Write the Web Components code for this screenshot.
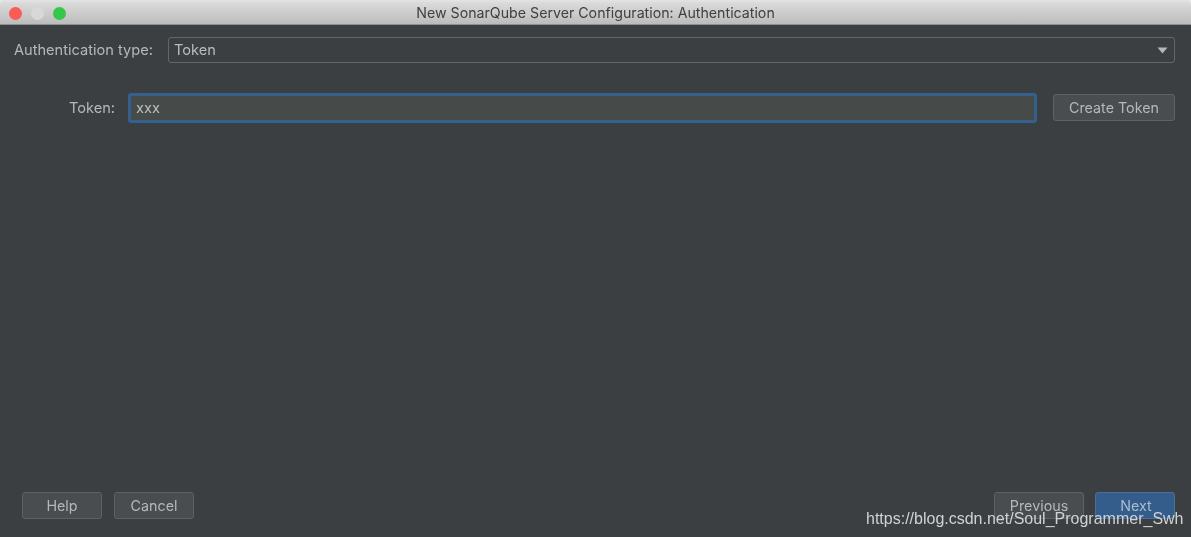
<!DOCTYPE html>
<html>
<head>
<meta charset="utf-8">
<title>New SonarQube Server Configuration: Authentication</title>
<style>
  html, body { margin: 0; height: 100%; background: #3c3f41; overflow: hidden; }
  body { font-family: "Inter", "Liberation Sans", sans-serif; }
</style>
</head>
<body>
<auth-dialog></auth-dialog>

<script>
class TitleBar extends HTMLElement {
  constructor() {
    super();
    this.attachShadow({ mode: 'open' });
    this.shadowRoot.innerHTML = `
      <style>
        :host {
          display: flex;
          align-items: center;
          height: 25px;
          flex: none;
          box-sizing: border-box;
          padding: 2px 0 0 9px;
          background: linear-gradient(#e4e4e4, #d9d9d9 15%, #bcbcbc);
          border-bottom: 1px solid #8f8f8f;
          border-radius: 5px 5px 0 0;
        }
        .dot { width: 13px; height: 13px; border-radius: 50%; margin-right: 9px; flex: none; }
        .close { background: #fb5b55; }
        .min { background: #d8d8d8; }
        .max { background: #34c748; }
        .title {
          flex: 1;
          text-align: center;
          margin: -2px 0 0 -75px;
          font: 14.2px "Inter", "Liberation Sans", sans-serif;
          color: #404040;
        }
      </style>
      <span class="dot close"></span>
      <span class="dot min"></span>
      <span class="dot max"></span>
      <span class="title"><slot></slot></span>
    `;
  }
}

class DlgButton extends HTMLElement {
  constructor() {
    super();
    this.attachShadow({ mode: 'open' });
    this.shadowRoot.innerHTML = `
      <style>
        :host {
          display: flex;
          align-items: center;
          justify-content: center;
          box-sizing: border-box;
          height: 27px;
          flex: none;
          border: 1px solid #5e6264;
          border-radius: 3px;
          background: #494d4f;
          color: #b4b8ba;
          font: 14.3px "Inter", "Liberation Sans", sans-serif;
        }
        :host([primary]) {
          padding-left: 2px;
          background: #345d8c;
          border-color: #4a7096;
          color: #a9bccf;
        }
      </style>
      <slot></slot>
    `;
  }
}

class ComboBox extends HTMLElement {
  constructor() {
    super();
    this.attachShadow({ mode: 'open' });
    this.shadowRoot.innerHTML = `
      <style>
        :host {
          display: flex;
          align-items: center;
          flex: 1;
          box-sizing: border-box;
          height: 26px;
          padding: 0 6px 0 5px;
          border: 1px solid #63676a;
          border-radius: 3px;
          background: #3c3f41;
          color: #b9bcbe;
          font: 14.6px "Inter", "Liberation Sans", sans-serif;
        }
        .text { flex: 1; }
        svg { display: block; }
      </style>
      <span class="text"><slot></slot></span>
      <svg width="11" height="7" viewBox="0 0 11 7"><path d="M0.5 0.5h10L5.5 6.5z" fill="#b4b7b9"/></svg>
    `;
  }
}

class TextInput extends HTMLElement {
  constructor() {
    super();
    this.attachShadow({ mode: 'open' });
    this.shadowRoot.innerHTML = `
      <style>
        :host {
          display: flex;
          align-items: center;
          flex: 1;
          box-sizing: border-box;
          height: 30px;
          padding: 0 5px;
          border: 3px solid #34608e;
          border-radius: 3px;
          background: #464b4a;
          color: #bcbfc0;
          font: 14.6px "Inter", "Liberation Sans", sans-serif;
        }
      </style>
      <slot></slot>
    `;
  }
}

class AuthDialog extends HTMLElement {
  constructor() {
    super();
    this.attachShadow({ mode: 'open' });
    this.shadowRoot.innerHTML = `
      <style>
        :host {
          display: flex;
          flex-direction: column;
          height: 537px;
          position: relative;
          background: #e8e8e8;
          color: #b4b8ba;
          font: 14.6px "Inter", "Liberation Sans", sans-serif;
          filter: blur(0.45px);
        }
        .form { flex: 1; background: #3c3f41; padding: 12px 16px 0 14px; display: flex; flex-direction: column; }
        .row { display: flex; align-items: center; }
        .type label { width: 154px; flex: none; }
        .token { margin-top: 30px; }
        .token label { width: 114px; flex: none; text-align: right; padding-right: 13px; box-sizing: border-box; }
        .token dlg-button { width: 122px; margin: -1px 0 0 16px; }
        .footer { display: flex; background: #3c3f41; padding: 0 16px 18px 22px; gap: 12px; }
        .footer .help, .footer .cancel { width: 80px; }
        .footer .prev { width: 90px; margin-left: auto; }
        .footer .next { width: 80px; margin-left: -1px; }
        .mark {
          position: absolute;
          left: 866px;
          top: 510px;
          font: 16px "Liberation Sans", sans-serif;
          color: #d0d2d3;
          white-space: nowrap;
        }
      </style>
      <title-bar>New SonarQube Server Configuration: Authentication</title-bar>
      <div class="form">
        <div class="row type">
          <label>Authentication type:</label>
          <combo-box>Token</combo-box>
        </div>
        <div class="row token">
          <label>Token:</label>
          <text-input>xxx</text-input>
          <dlg-button>Create Token</dlg-button>
        </div>
      </div>
      <div class="footer">
        <dlg-button class="help">Help</dlg-button>
        <dlg-button class="cancel">Cancel</dlg-button>
        <dlg-button class="prev">Previous</dlg-button>
        <dlg-button class="next" primary>Next</dlg-button>
      </div>
      <span class="mark">https://blog.csdn.net/Soul_Programmer_Swh</span>
    `;
  }
}

customElements.define('title-bar', TitleBar);
customElements.define('dlg-button', DlgButton);
customElements.define('combo-box', ComboBox);
customElements.define('text-input', TextInput);
customElements.define('auth-dialog', AuthDialog);
</script>
</body>
</html>
